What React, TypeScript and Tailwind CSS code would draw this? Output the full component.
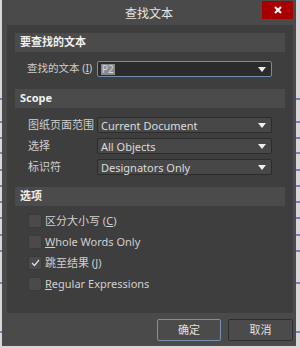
import React from "react";

const font = { fontFamily: '"Noto Sans", "Noto Sans CJK SC", sans-serif' };

function Arrow() {
  return (
    <svg width="8" height="5" viewBox="0 0 8 5" className="shrink-0">
      <path d="M0 0 H8 L4 5 Z" fill="#f0f0f0" />
    </svg>
  );
}

function Header({ children }: { children: React.ReactNode }) {
  return (
    <div className="mx-[8px] h-[19px] bg-[#4b4b4b] flex items-center pl-[5px] text-[11px] font-bold text-[#f0f0f0]">
      {children}
    </div>
  );
}

function Select({ label, value }: { label: string; value: string }) {
  return (
    <div className="flex items-center h-[16px]">
      <div className="w-[90px] pl-[21px] text-[11px] text-[#cfcfcf] whitespace-nowrap">{label}</div>
      <div className="w-[175px] h-[16px] bg-[#474747] border border-[#2c2c2c] rounded-[2px] flex items-center justify-between pl-[3px] pr-[5px]">
        <span className="text-[11px] text-[#dcdcdc] leading-none">{value}</span>
        <Arrow />
      </div>
    </div>
  );
}

function Check({ checked, children }: { checked?: boolean; children: React.ReactNode }) {
  return (
    <div className="flex items-center h-[14px] pl-[21px]">
      <div className="w-[14px] h-[14px] bg-[#4a4a4a] border border-[#3a3a3a] rounded-[2px] flex items-center justify-center">
        {checked && (
          <svg width="9" height="8" viewBox="0 0 9 8">
            <path d="M1 4 L3.5 6.5 L8 1" stroke="#e0e0e0" strokeWidth="1.2" fill="none" />
          </svg>
        )}
      </div>
      <span className="ml-[3px] text-[11px] text-[#d0d0d0] whitespace-nowrap">{children}</span>
    </div>
  );
}

export default function App() {
  const ys = [99, 122, 138, 153, 170, 186, 202, 218, 235, 251, 283, 332];
  return (
    <div className="relative w-[300px] h-[348px] bg-[#d8d8d8] overflow-hidden" style={font}>
      <svg className="absolute inset-0" width="300" height="348">
        {ys.map((y) => (
          <line key={y} x1="0" x2="300" y1={y} y2={y} stroke="#1c2a9a" strokeWidth="1" />
        ))}
      </svg>
      <div className="relative ml-[2px] w-[294px] h-[346px] bg-[#4a4a4a] flex flex-col">
        <div className="h-[25px] flex items-start relative">
          <div className="flex-1 text-center pt-[5px] text-[12px] text-[#e6e6e6]">查找文本</div>
          <div className="absolute right-[3px] top-[1px] w-[31px] h-[18px] bg-[#a80000] flex items-center justify-center">
            <svg width="8" height="8" viewBox="0 0 8 8">
              <path d="M1 1 L7 7 M7 1 L1 7" stroke="#ffffff" strokeWidth="2" />
            </svg>
          </div>
        </div>
        <div className="ml-[5px] mr-[3px] h-[288px] bg-[#3e3e3e] flex flex-col pt-[8px]">
          <Header>要查找的文本</Header>
          <div className="flex items-center h-[16px] mt-[9px]">
            <div className="pl-[20px] w-[90px] text-[10.5px] text-[#cfcfcf] whitespace-nowrap">
              查找的文本 (<span className="underline">I</span>)
            </div>
            <div className="w-[175px] h-[16px] bg-[#2b2b2b] border border-[#6f8eb0] rounded-[2px] flex items-center justify-between pl-[3px] pr-[5px]">
              <span className="bg-[#8a8a8a] text-[#d8d8d8] text-[10px] leading-[11px] px-[1px]">P2</span>
              <Arrow />
            </div>
          </div>
          <div className="mt-[12px]">
            <Header>Scope</Header>
          </div>
          <div className="mt-[9px] flex flex-col gap-[5px]">
            <Select label="图纸页面范围" value="Current Document" />
            <Select label="选择" value="All Objects" />
            <Select label="标识符" value="Designators Only" />
          </div>
          <div className="mt-[12px]">
            <Header>选项</Header>
          </div>
          <div className="mt-[8px] flex flex-col gap-[7px]">
            <Check>
              区分大小写 (<span className="underline">C</span>)
            </Check>
            <Check>
              <span className="underline">W</span>hole Words Only
            </Check>
            <Check checked>
              跳至结果 (<span className="underline">J</span>)
            </Check>
            <Check>
              <span className="underline">R</span>egular Expressions
            </Check>
          </div>
        </div>
        <div className="flex justify-end gap-[7px] mr-[3px] mt-[6px]">
          <div className="w-[64px] h-[22px] bg-[#4b4b4b] border border-[#7592b5] rounded-[2px] flex items-center justify-center text-[11px] text-[#e0e0e0]">
            确定
          </div>
          <div className="w-[65px] h-[22px] bg-[#4b4b4b] border border-[#2e2e2e] rounded-[2px] flex items-center justify-center text-[11px] text-[#e0e0e0]">
            取消
          </div>
        </div>
      </div>
    </div>
  );
}
